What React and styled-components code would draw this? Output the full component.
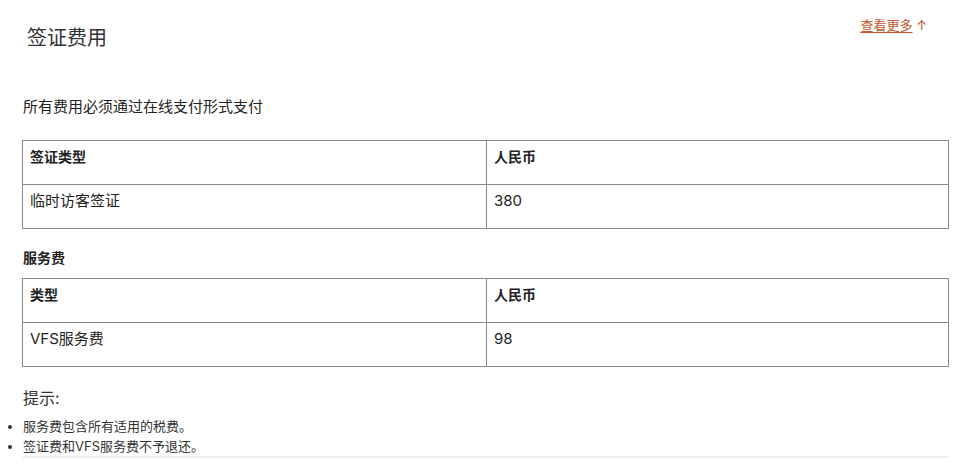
import React from "react";
import styled, { createGlobalStyle } from "styled-components";

const Global = createGlobalStyle`
  html, body { margin: 0; padding: 0; background: #fff; }
  body { font-family: Inter, "Noto Sans CJK SC", "Noto Sans", sans-serif; color: #222; }
`;

const Page = styled.div`
  width: 975px;
  padding: 0 26px 0 23px;
  box-sizing: border-box;
`;

const Header = styled.header`
  display: flex;
  justify-content: space-between;
  align-items: flex-start;
  padding-top: 14px;
`;

const Title = styled.h2`
  margin: 10px 0 0 4px;
  font-size: 20px;
  line-height: 28px;
  font-weight: 400;
  color: #333;
`;

const MoreLink = styled.a`
  margin-right: 22px;
  font-size: 13px;
  line-height: 22px;
  color: #c0562b;
  text-decoration: none;
  span { text-decoration: underline; text-underline-offset: 2px; }
`;

const Intro = styled.p`
  margin: 44px 0 0;
  font-size: 15px;
  line-height: 22px;
`;

const Table = styled.table`
  width: 927px;
  margin-left: -1px;
  margin-top: ${(p) => p.$mt}px;
  border-collapse: collapse;
  table-layout: fixed;
`;

const Cell = styled.td`
  box-sizing: border-box;
  border: 1px solid #8a8a8a;
  padding: 6px 7px 17px;
  vertical-align: top;
  font-size: ${(p) => (p.$head ? 14 : 15)}px;
  font-weight: ${(p) => (p.$head ? 700 : 400)};
  line-height: 20px;
  color: #222;
  width: ${(p) => p.$w || "auto"};
`;

const SubHeading = styled.h3`
  margin: 19px 0 0;
  font-size: 14px;
  line-height: 20px;
  font-weight: 700;
`;

const Hint = styled.p`
  margin: 20px 0 0;
  font-size: 16px;
  line-height: 22px;
  color: #333;
`;

const List = styled.ul`
  margin: 7px 0 0;
  padding: 0;
  list-style: disc outside;
  font-size: 13px;
  line-height: 20px;
  color: #333;
  border-bottom: 2px solid #ececec;
  width: 925px;
`;

const Item = styled.li``;

function FeeTable({ mt, head, rows }) {
  return (
    <Table $mt={mt}>
      <tbody>
        <tr>
          <Cell $head $w="464px">{head[0]}</Cell>
          <Cell $head>{head[1]}</Cell>
        </tr>
        {rows.map((r, i) => (
          <tr key={i}>
            <Cell>{r[0]}</Cell>
            <Cell>{r[1]}</Cell>
          </tr>
        ))}
      </tbody>
    </Table>
  );
}

export default function App() {
  return (
    <>
      <Global />
      <Page>
        <Header>
          <Title>签证费用</Title>
          <MoreLink href="#"><span>查看更多</span> ↑</MoreLink>
        </Header>
        <Intro>所有费用必须通过在线支付形式支付</Intro>
        <FeeTable mt={22} head={["签证类型", "人民币"]} rows={[["临时访客签证", "380"]]} />
        <SubHeading>服务费</SubHeading>
        <FeeTable mt={10} head={["类型", "人民币"]} rows={[["VFS服务费", "98"]]} />
        <Hint>提示:</Hint>
        <List>
          <Item>服务费包含所有适用的税费。</Item>
          <Item>签证费和VFS服务费不予退还。</Item>
        </List>
      </Page>
    </>
  );
}
